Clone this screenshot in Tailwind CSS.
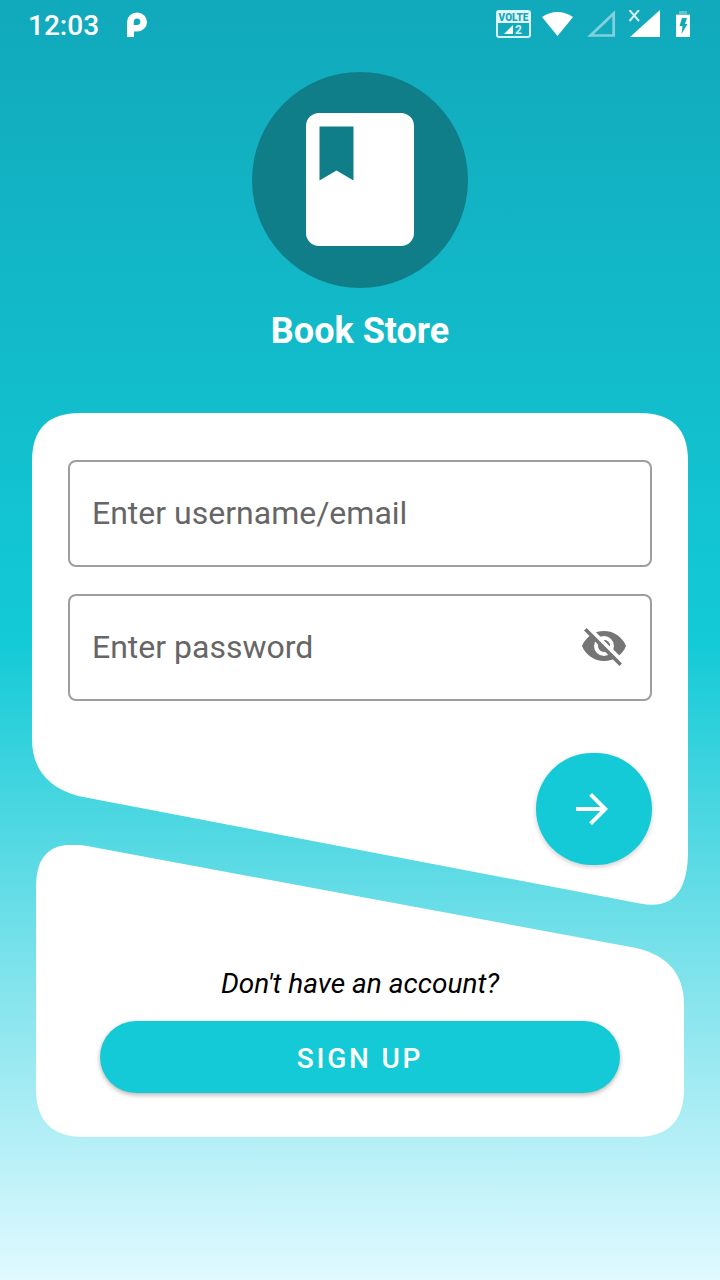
<!DOCTYPE html>
<html lang="en">
<head>
<meta charset="utf-8">
<meta name="viewport" content="width=device-width, initial-scale=1">
<title>Book Store</title>
<script src="https://cdn.jsdelivr.net/npm/@tailwindcss/browser@4"></script>
</head>
<body class="min-h-screen bg-linear-to-b/srgb from-[#11a9bc] via-[#13cad6] to-[#e1f9ff] font-['Roboto',sans-serif]">
<header class="flex h-12 items-center justify-between px-7 text-white">
  <div class="flex items-center gap-7">
    <time class="pt-1 text-[28px] leading-8 font-medium">12:03</time>
    <svg class="h-[25px] w-5" viewBox="0 0 20 25" fill="#fff" aria-hidden="true"><path fill-rule="evenodd" d="M0 25V10A10 9.500 0 1 1 10 19.500H7V25ZM10 6.500A3.250 3.250 0 0 0 6.700 10V13H10A3.250 3.250 0 0 0 10 6.500Z"/></svg>
  </div>
  <svg class="h-7 w-[196px]" viewBox="496 10 196 28" aria-hidden="true">
    <rect x="497" y="11" width="33" height="26" rx="2" fill="none" stroke="#d8f1f4" stroke-width="2"/>
    <rect x="497" y="11" width="33" height="12" fill="#e6f6f8"/>
    <text x="513.500" y="21" text-anchor="middle" font-size="10" font-weight="900" fill="#11a9bc">VOLTE</text>
    <path d="M504 34h9v-9z" fill="#fff"/>
    <text x="515" y="34" font-size="12" font-weight="700" fill="#d8f1f4">2</text>
    <path d="M542 17Q557.500 7 573 17L557.500 36Z" fill="#fff"/>
    <path d="M590.500 35.500H613.700V13.500Z" fill="none" stroke="#83d1da" stroke-width="2.700"/>
    <path d="M630 37h30V10z" fill="#fff"/>
    <path d="M629.500 10l9.500 11M639 10l-9.500 11" stroke="#d8f1f4" stroke-width="2"/>
    <path d="M679 11h8v3h3v3h-14v-3h3z" fill="#60c5d1"/>
    <path d="M676 15h14v22h-14z" fill="#fff"/>
    <path d="M682 18h5l-2 6h2.500l-6 10 1-8h-3z" fill="#11a9bc"/>
  </svg>
</header>

<main>
  <div class="flex flex-col items-center pt-6">
    <svg class="size-54" viewBox="0 0 216 216" role="img" aria-label="Book">
      <circle cx="108" cy="108" r="108" fill="#0f7e89"/>
      <path fill="#fff" fill-rule="evenodd" d="M67 41h82a13 13 0 0 1 13 13v107a13 13 0 0 1-13 13H67a13 13 0 0 1-13-13V54a13 13 0 0 1 13-13ZM67.500 54.500v54l17-10 17 10v-54Z"/>
    </svg>
    <h1 class="mt-5 text-4xl leading-[46px] font-bold text-white">Book Store</h1>
  </div>

  <form class="relative mx-8 mt-[59px] flex flex-col px-9 pt-[47px] pb-10">
    <svg class="absolute inset-0 size-full" viewBox="0 0 656 492" preserveAspectRatio="none" fill="#fff" aria-hidden="true"><path d="M48 0H608Q656 0 656 48V438Q656 500 608 490.500L46 383Q0 370 0 326V48Q0 0 48 0Z"/></svg>
    <div class="relative flex flex-col gap-[27px]">
      <input type="text" aria-label="Enter username/email" placeholder="Enter username/email" class="h-[107px] w-full rounded-lg border-2 border-[#9e9e9e] px-[22px] pb-0.5 text-[32px] text-black outline-none placeholder:text-[#666]">
      <div class="relative">
        <input type="password" aria-label="Enter password" placeholder="Enter password" class="h-[107px] w-full rounded-lg border-2 border-[#9e9e9e] pr-20 pb-0.5 pl-[22px] text-[32px] text-black outline-none placeholder:text-[#666]">
        <button type="button" aria-label="Show password" class="absolute top-7 right-6 size-12">
          <svg class="size-12" viewBox="0 0 24 24" aria-hidden="true"><path fill="#757575" d="M12 4.500C7 4.500 2.730 7.610 1 12c1.730 4.390 6 7.500 11 7.500s9.270-3.110 11-7.500c-1.730-4.390-6-7.500-11-7.500Z"/><circle cx="12" cy="12" r="4" fill="none" stroke="#fff" stroke-width="2"/><path d="M3.400 1.900 22.500 21" stroke="#fff" stroke-width="2"/><path d="M11.800 9A3 3 0 0 1 15 12.200Z" fill="#757575"/><path d="M2.650 3.650 20.350 21.350" stroke="#757575" stroke-width="1.800"/></svg>
        </button>
      </div>
    </div>
    <button type="submit" aria-label="Log in" class="relative mt-[52px] flex h-28 w-29 items-center justify-center self-end rounded-[56px] bg-[#13cad6] pr-1 shadow-[0_2px_5px_rgba(0,0,0,0.2)]">
      <svg class="size-12" viewBox="0 0 24 24" fill="#fff" aria-hidden="true"><path d="m12 4-1.410 1.410L16.170 11H4v2h12.170l-5.580 5.590L12 20l8-8z"/></svg>
    </button>
  </form>

  <section class="relative mx-9 -mt-15 flex flex-col px-16 pt-[123px] pb-11">
    <svg class="absolute inset-0 size-full" viewBox="0 0 648 292" preserveAspectRatio="none" fill="#fff" aria-hidden="true"><path d="M51 1 600 103Q648 114 648 160V244Q648 292 600 292H48Q0 292 0 244V41Q0-8 51 1Z"/></svg>
    <p class="relative text-center text-[28px] leading-8 text-black italic">Don't have an account?</p>
    <button type="button" class="relative mt-[21px] h-18 rounded-full bg-[#13cad6] pt-1 text-[28px] font-medium tracking-widest text-white shadow-[0_2px_5px_rgba(0,0,0,0.3)]">SIGN UP</button>
  </section>
</main>
</body>
</html>
